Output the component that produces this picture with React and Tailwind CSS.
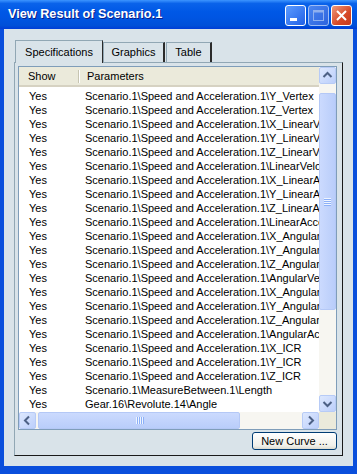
import React from "react";

const ROWS = [
  "Scenario.1\\Speed and Acceleration.1\\Y_Vertex",
  "Scenario.1\\Speed and Acceleration.1\\Z_Vertex",
  "Scenario.1\\Speed and Acceleration.1\\X_LinearVelocity",
  "Scenario.1\\Speed and Acceleration.1\\Y_LinearVelocity",
  "Scenario.1\\Speed and Acceleration.1\\Z_LinearVelocity",
  "Scenario.1\\Speed and Acceleration.1\\LinearVelocity",
  "Scenario.1\\Speed and Acceleration.1\\X_LinearAcceleration",
  "Scenario.1\\Speed and Acceleration.1\\Y_LinearAcceleration",
  "Scenario.1\\Speed and Acceleration.1\\Z_LinearAcceleration",
  "Scenario.1\\Speed and Acceleration.1\\LinearAcceleration",
  "Scenario.1\\Speed and Acceleration.1\\X_AngularVelocity",
  "Scenario.1\\Speed and Acceleration.1\\Y_AngularVelocity",
  "Scenario.1\\Speed and Acceleration.1\\Z_AngularVelocity",
  "Scenario.1\\Speed and Acceleration.1\\AngularVelocity",
  "Scenario.1\\Speed and Acceleration.1\\X_AngularAcceleration",
  "Scenario.1\\Speed and Acceleration.1\\Y_AngularAcceleration",
  "Scenario.1\\Speed and Acceleration.1\\Z_AngularAcceleration",
  "Scenario.1\\Speed and Acceleration.1\\AngularAcceleration",
  "Scenario.1\\Speed and Acceleration.1\\X_ICR",
  "Scenario.1\\Speed and Acceleration.1\\Y_ICR",
  "Scenario.1\\Speed and Acceleration.1\\Z_ICR",
  "Scenario.1\\MeasureBetween.1\\Length",
  "Gear.16\\Revolute.14\\Angle",
];

// XP style scroll arrow button
function ArrowBtn({ dir }) {
  const pts = {
    up: "4.5,10 8.5,6 12.5,10",
    down: "4.5,7 8.5,11 12.5,7",
    left: "10,4.5 6,8.5 10,12.5",
    right: "7,4.5 11,8.5 7,12.5",
  }[dir];
  return (
    <div className="w-[17px] h-[17px] shrink-0 rounded-[2px] border border-[#b7cbf6] bg-[linear-gradient(135deg,#dde8fe,#bccffb)] flex items-center justify-center">
      <svg width="17" height="17" viewBox="0 0 17 17" className="-m-px">
        <polyline points={pts} fill="none" stroke="#4d6185" strokeWidth="2" />
      </svg>
    </div>
  );
}

function TitleBar() {
  return (
    <div className="h-[29px] shrink-0 flex items-center pl-[8px] pr-[5px] bg-[linear-gradient(to_bottom,#3d95ff_0%,#0a63ea_12%,#0058e6_40%,#0055e3_60%,#0050d8_88%,#003dd7_100%)]">
      <span className="flex-1 text-white font-bold text-[12.7px] [text-shadow:1px_1px_0_#0a1e88]">
        View Result of Scenario.1
      </span>
      <div className="flex gap-[2px] self-start mt-[5px]">
        <div className="w-[21px] h-[21px] rounded-[3px] border border-white bg-[linear-gradient(135deg,#5c9cff,#2160e6)]">
          <svg width="19" height="19" viewBox="0 0 19 19">
            <rect x="4" y="12" width="7" height="3" fill="white" />
          </svg>
        </div>
        <div className="w-[21px] h-[21px] rounded-[3px] border border-[#9fbdf5] bg-[linear-gradient(135deg,#4b86f0,#2d63de)]">
          <svg width="19" height="19" viewBox="0 0 19 19">
            <rect x="4.5" y="4.5" width="10" height="10" fill="none" stroke="#8fb0ef" />
            <rect x="4.5" y="4.5" width="10" height="2" fill="#8fb0ef" />
          </svg>
        </div>
        <div className="w-[21px] h-[21px] rounded-[3px] border border-white bg-[linear-gradient(135deg,#ee9a7c,#d64827_60%,#c53a1e)]">
          <svg width="19" height="19" viewBox="0 0 19 19">
            <path d="M5 5 L14 14 M14 5 L5 14" stroke="white" strokeWidth="2" />
          </svg>
        </div>
      </div>
    </div>
  );
}

export default function App() {
  return (
    <div className="w-[357px] h-[474px] flex flex-col bg-[#0a4fdc] font-['Liberation_Sans',Arial,sans-serif] text-[11px] text-black overflow-hidden">
      <TitleBar />
      <div className="flex-1 mx-[4px] mb-[8px] bg-[#d9e3e9] pt-[11px] px-[10px] pb-[10px] flex flex-col min-h-0">
        {/* Tabs */}
        <div className="h-[22px] flex items-end pl-[1px]">
          <div className="relative z-10 -mb-px h-[23px] w-[88px] flex items-center justify-center bg-[#d9e3e9] border-t border-l border-[#91a7b4] border-r border-r-[#2b2b2b]">
            Specifications
          </div>
          <div className="h-[20px] w-[62px] flex items-center justify-center border-t border-l border-[#91a7b4] border-r-2 border-r-[#2b2b2b]">
            Graphics
          </div>
          <div className="ml-[1px] h-[20px] w-[46px] flex items-center justify-center border-t border-l border-[#91a7b4] border-r-2 border-r-[#2b2b2b]">
            Table
          </div>
        </div>

        {/* Tab panel */}
        <div className="flex-1 flex flex-col border-t border-l border-[#91a7b4] border-r border-b border-r-[#1a1a1a] border-b-[#1a1a1a] pt-[3px] pl-[3px] pr-[5px] pb-[5px] min-h-0">
          {/* List */}
          <div className="h-[364px] w-[319px] flex flex-col border border-[#7f9db9] bg-white">
            <div className="flex-1 flex min-h-0">
              <div className="flex-1 min-w-0 overflow-hidden">
                <div className="h-[20px] flex items-center bg-[#ebeadb] border-b-2 border-[#d6d2c2]">
                  <div className="w-[59px] pl-[9px]">Show</div>
                  <div className="w-[2px] h-[13px] border-l border-[#c7c5b2] bg-white" />
                  <div className="pl-[7px]">Parameters</div>
                </div>
                <div className="pt-[2px]">
                  {ROWS.map((r) => (
                    <div key={r} className="h-[14px] flex items-center whitespace-nowrap">
                      <div className="w-[60px] shrink-0 pl-[10px]">Yes</div>
                      <div className="pl-[6px]">{r}</div>
                    </div>
                  ))}
                </div>
              </div>
              {/* vertical scrollbar */}
              <div className="w-[17px] flex flex-col bg-[#f7f6f1]">
                <ArrowBtn dir="up" />
                <div className="mt-[9px] h-[217px] rounded-[2px] border border-[#b4c8f6] bg-[linear-gradient(to_right,#cbdafe,#b9cdfa)] flex flex-col items-center justify-center gap-[1px]">
                  {[0, 1, 2, 3].map((i) => (
                    <div key={i} className="w-[7px] h-[1px] bg-[#eef4fe] shadow-[0_1px_0_#8cb0f8]" />
                  ))}
                </div>
                <div className="flex-1" />
                <ArrowBtn dir="down" />
              </div>
            </div>
            {/* horizontal scrollbar */}
            <div className="h-[17px] flex bg-[#f7f6f1]">
              <div className="w-[300px] flex">
                <ArrowBtn dir="left" />
                <div className="ml-[2px] w-[202px] rounded-[2px] border border-[#b4c8f6] bg-[linear-gradient(to_bottom,#cbdafe,#b9cdfa)] flex items-center justify-center gap-[1px]">
                  {[0, 1, 2, 3].map((i) => (
                    <div key={i} className="w-[1px] h-[7px] bg-[#eef4fe] shadow-[1px_0_0_#8cb0f8]" />
                  ))}
                </div>
                <div className="flex-1" />
                <ArrowBtn dir="right" />
              </div>
              <div className="w-[17px] bg-[#ebeadb]" />
            </div>
          </div>

          <button className="self-end mt-[2px] h-[18px] w-[85px] rounded-[3px] border border-[#003c74] bg-[linear-gradient(to_bottom,#ffffff,#f0efe9_80%,#dcdad0)] flex items-center justify-center leading-none">
            New Curve ...
          </button>
        </div>
      </div>
    </div>
  );
}
